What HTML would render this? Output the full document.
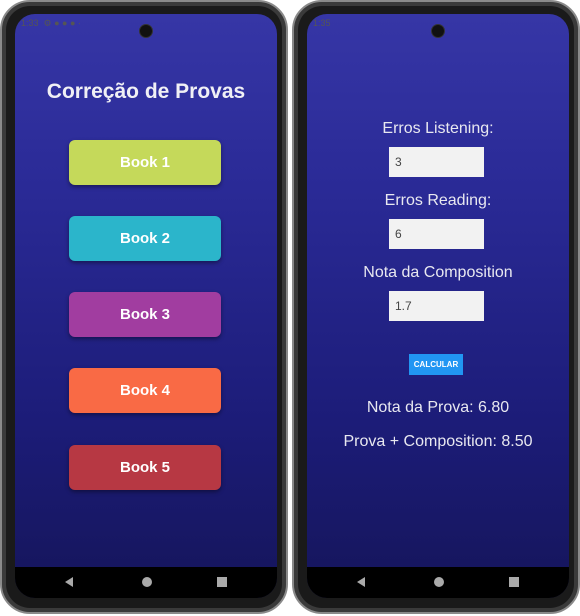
<!DOCTYPE html><html><head><style>
body{margin:0;width:580px;height:616px;background:#fff;position:relative;overflow:hidden;font-family:"Liberation Sans",sans-serif}
.phone{position:absolute;top:0;width:288px;height:614px;border-radius:30px;background:#1a1a1a;border:2px solid #8a8a8a;box-sizing:border-box;box-shadow:inset 0 0 0 4px #3a3a3a}
.screen{position:absolute;left:13px;top:12px;width:262px;height:584px;border-radius:20px;overflow:hidden;background:linear-gradient(#3636a6,#2a2a96 30%,#1c1c78 70%,#15155a)}
.nav{position:absolute;left:0;bottom:0;width:100%;height:31px;background:#000}
.cam{position:absolute;left:124px;top:10px;width:14px;height:14px;border-radius:50%;background:#111;border:1px solid #333;box-sizing:border-box}
.sb{position:absolute;top:4px;left:6px;font-size:9px;color:#555}
.btn{position:absolute;left:54px;width:152px;height:45px;border-radius:6px;color:#fff;font-weight:bold;font-size:15px;text-align:center;line-height:45px;box-shadow:0 2px 4px rgba(0,0,0,.4)}
.lbl{position:absolute;left:0;width:100%;text-align:center;color:#e8e8f0;font-size:16px}
.inp{position:absolute;left:82px;width:95px;height:30px;background:#f2f2f2;color:#444;font-size:12px;line-height:30px;padding-left:6px;box-sizing:border-box}
</style></head><body>
<div class="phone" style="left:0">
<div class="screen">
<div class="sb">1:33 &nbsp;⚙ ● ● ● ·</div>
<div class="cam"></div>
<div class="lbl" style="top:66px;font-size:21px;font-weight:bold;color:#f0f0f5">Correção de Provas</div>
<div class="btn" style="top:126px;background:#c5d95a">Book 1</div>
<div class="btn" style="top:202px;background:#2bb5cb">Book 2</div>
<div class="btn" style="top:278px;background:#a13da0">Book 3</div>
<div class="btn" style="top:354px;background:#f96a45">Book 4</div>
<div class="btn" style="top:431px;background:#b73843">Book 5</div>
<div class="nav"><svg width="262" height="31"><path d="M58 10 L58 20 L50 15Z" fill="#aaa"/><circle cx="132" cy="15" r="5" fill="#aaa"/><rect x="202" y="10" width="10" height="10" fill="#aaa"/></svg></div>
</div></div>
<div class="phone" style="left:292px">
<div class="screen">
<div class="sb">1:35</div>
<div class="cam"></div>
<div class="lbl" style="top:106px">Erros Listening:</div>
<div class="inp" style="top:133px">3</div>
<div class="lbl" style="top:178px">Erros Reading:</div>
<div class="inp" style="top:205px">6</div>
<div class="lbl" style="top:250px">Nota da Composition</div>
<div class="inp" style="top:277px">1.7</div>
<div style="position:absolute;left:102px;top:340px;width:54px;height:21px;background:#2196f3;color:#fff;font-size:8px;font-weight:bold;text-align:center;line-height:21px">CALCULAR</div>
<div class="lbl" style="top:385px">Nota da Prova: 6.80</div>
<div class="lbl" style="top:419px">Prova + Composition: 8.50</div>
<div class="nav"><svg width="262" height="31"><path d="M58 10 L58 20 L50 15Z" fill="#aaa"/><circle cx="132" cy="15" r="5" fill="#aaa"/><rect x="202" y="10" width="10" height="10" fill="#aaa"/></svg></div>
</div></div>
</body></html>
